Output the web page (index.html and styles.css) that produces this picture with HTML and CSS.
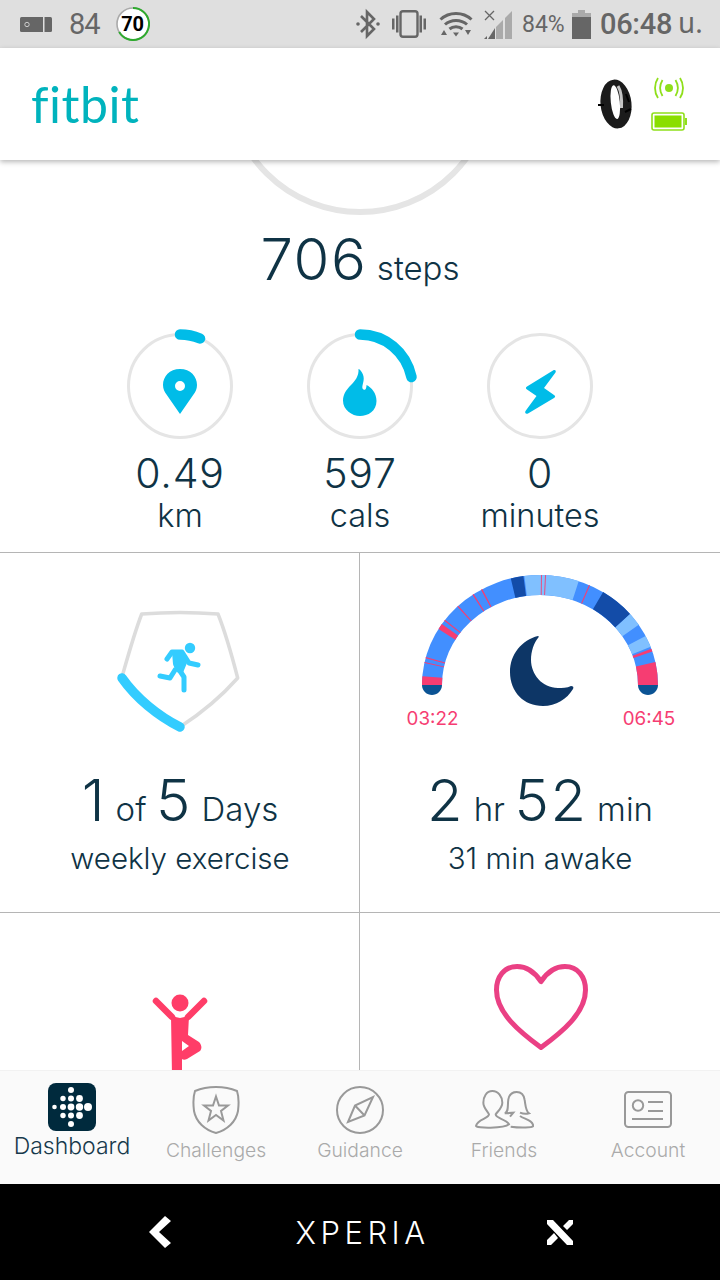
FILE: index.html
```html
<!DOCTYPE html>
<html lang="en">
<head>
<meta charset="utf-8">
<title>Fitbit dashboard</title>
<link rel="stylesheet" href="styles.css">
</head>
<body>
<div class="phone">
  <div class="status">
    <div class="status-left">
      <svg class="ic-card" viewBox="0 0 32 15"><rect width="32" height="15" rx="1.5" fill="#666"/><rect x="23" y="0" width="1.5" height="15" fill="#dfdfdf"/><circle cx="7" cy="7.5" r="2.2" fill="none" stroke="#ccc" stroke-width="1"/></svg>
      <span class="status-num">84</span>
      <span class="speed"><svg class="speed-ring" viewBox="0 0 34 34"><circle cx="17" cy="17" r="16" fill="#fff" stroke="#aaa" stroke-width="1.6"/><path d="M17 1A16 16 0 1 1 3.2 25" fill="none" stroke="#2eaa2e" stroke-width="2"/></svg><b class="speed-text">70</b></span>
    </div>
    <div class="status-right">
      <svg class="ic-bt" viewBox="0 0 24 32"><path d="M5 8L18 21L11 28V4L18 11L5 24" fill="none" stroke="#666" stroke-width="2.6"/><circle cx="2" cy="16" r="1.8" fill="#666"/><circle cx="22" cy="16" r="1.8" fill="#666"/></svg>
      <svg class="ic-vib" viewBox="0 0 36 28"><rect x="9.5" y="1.2" width="17" height="25.6" rx="2.5" fill="none" stroke="#666" stroke-width="2.4"/><path d="M1 8.5h2.5v11H1zM5 5.500h2.500v17H5zM28.500 5.500H31v17h-2.500zM32.500 8.500H35v11h-2.500z" fill="#666"/></svg>
      <svg class="ic-wifi" viewBox="0 0 34 28"><path d="M1.500 9.500C10 1.500 24 1.500 32.500 9.500M6 14.500C12 9 22 9 28 14.500M10.500 19C14 16 20 16 23.500 19" fill="none" stroke="#666" stroke-width="3"/><path d="M14 22.500h6l-3 4zM2 25l3-5 3 5zM26 20h6l-3 5z" fill="#666"/></svg>
      <svg class="ic-sig" viewBox="0 0 28 32"><path d="M28 3V31H21V10z" fill="#aaa"/><path d="M19 12V31H12V19z" fill="#aaa"/><path d="M11 20V31H4z" fill="#666"/><path d="M3 28v3H0z" fill="#666"/><path d="M1 3l9 9M10 3l-9 9" stroke="#666" stroke-width="1.300"/></svg>
      <span class="status-pct">84%</span>
      <svg class="ic-batt" viewBox="0 0 19 29"><path d="M6 0h7v3h6v26H0V3h6z" fill="#666"/><path d="M6 0h7v3h6v4H0V3h6z" fill="#aaa"/></svg>
      <span class="status-time">06:48</span>
      <span class="status-era">น.</span>
    </div>
  </div>

  <header class="topbar">
    <span class="logo">fitbit</span>
    <div class="device">
      <svg class="ic-band" viewBox="0 0 36 52"><g transform="rotate(-6 18 26)"><ellipse cx="18" cy="26" rx="15.500" ry="24.500" fill="#1b1b1b"/><ellipse cx="17.500" cy="24" rx="4.500" ry="17" fill="#fff"/></g><path d="M20 8C23 13 24 21 23.500 30" fill="none" stroke="#c4c4c4" stroke-width="3"/><path d="M28 16l3 8M27 34l6-3M0 27h6" stroke="#000" stroke-width="2"/></svg>
      <div class="device-state">
        <svg class="ic-sync" viewBox="0 0 30 22"><circle cx="15" cy="11" r="4" fill="#8fdf1a"/><path d="M8.500 3C5.500 8 5.500 14 8.500 19M4 1C0 7 0 15 4 21M21.500 3C24.500 8 24.500 14 21.500 19M26 1C30 7 30 15 26 21" fill="none" stroke="#8fdf1a" stroke-width="1.800"/></svg>
        <svg class="ic-charge" viewBox="0 0 36 19"><rect x="1" y="1" width="32" height="17" rx="2" fill="#fff" stroke="#8fdf1a" stroke-width="1.600"/><rect x="3.500" y="3.500" width="27" height="12" fill="#8ade00"/><rect x="34" y="6" width="2" height="7" fill="#8fdf1a"/></svg>
      </div>
    </div>
  </header>

  <main class="content">
    <section class="hero">
      <svg class="hero-arc" viewBox="200 160 320 56"><circle cx="360" cy="80" r="132" fill="none" stroke="#e5e5e5" stroke-width="6"/></svg>
      <p class="steps"><span class="big">706</span> <span class="unit">steps</span></p>
      <div class="stats">
        <div class="stat">
          <svg class="stat-ring" viewBox="0 0 120 120"><circle cx="60" cy="60" r="51.500" fill="none" stroke="#e5e5e5" stroke-width="3"/><path d="M60 8.500A51.500 51.500 0 0 1 80 12.500" fill="none" stroke="#00bce8" stroke-width="10.500" stroke-linecap="round"/><path d="M60 43C49.500 43 43 50.500 43 59C43 63 44.500 66 46.500 68.500L60 88L73.500 68.500C75.500 66 77 63 77 59C77 50.500 70.500 43 60 43ZM60 55A5 5 0 1 1 60 65A5 5 0 1 1 60 55Z" fill="#00bce8" fill-rule="evenodd"/></svg>
          <div class="stat-val">0.49</div>
          <div class="stat-unit">km</div>
        </div>
        <div class="stat">
          <svg class="stat-ring" viewBox="0 0 120 120"><circle cx="60" cy="60" r="51.500" fill="none" stroke="#e5e5e5" stroke-width="3"/><path d="M60 8.500C85 8.500 106 26 111.500 51" fill="none" stroke="#00bce8" stroke-width="10.500" stroke-linecap="round"/><path d="M58.500 43C60 43 65 49 63.500 55C62.500 60 61.500 62 63.500 63.500C66 65 66.500 61 66.500 59C71.500 61.500 76.500 67 76.500 75C76.500 85 68 90 60 90C52 90 43 84 43 74.500C43 68 47 63 51 59C55 55 59 50 58.500 43Z" fill="#00bce8"/></svg>
          <div class="stat-val">597</div>
          <div class="stat-unit">cals</div>
        </div>
        <div class="stat">
          <svg class="stat-ring" viewBox="0 0 120 120"><circle cx="60" cy="60" r="51.500" fill="none" stroke="#e5e5e5" stroke-width="3"/><path d="M73 44.500L47 60.500C45.500 61.500 45.500 62.500 47 63.500L56.500 70L45.500 85C44.500 87 46 88.500 48 87.500L74 72C75.500 71 75.500 70 74 69L64 62L75.500 46.500C76.500 44.500 75 43.500 73 44.500Z" fill="#00bce8"/></svg>
          <div class="stat-val">0</div>
          <div class="stat-unit">minutes</div>
        </div>
      </div>
    </section>

    <section class="tiles">
      <article class="tile">
        <svg class="tile-art" viewBox="90 600 180 140">
          <path d="M121.700 678C128 656 134 634 141.700 614C166 612 194 612 218 614C226 634 232 656 237.700 678C220 698 200 714 180 727C158 716 138 698 121.700 678Z" fill="none" stroke="#dcdcdc" stroke-width="3.500" stroke-linejoin="round"/>
          <path d="M122 678C136 698 158 716 180 727" fill="none" stroke="#33ccff" stroke-width="9.500" stroke-linecap="round"/>
          <circle cx="190" cy="648" r="5.200" fill="#33ccff"/>
          <path d="M167 659L172 652H182L189 663L198 665M179 655L176 665L184 677L184 690M175 670L170 678L160 676" fill="none" stroke="#33ccff" stroke-width="5" stroke-linecap="round" stroke-linejoin="round"/>
          <path d="M172 652H183L187 663L182 675L177 672L173 664Z" fill="#33ccff"/>
        </svg>
        <p class="metric"><span class="big">1</span> <span class="unit">of</span> <span class="big">5</span> <span class="unit">Days</span></p>
        <p class="caption">weekly exercise</p>
      </article>
      <article class="tile tile-r">
        <svg class="tile-art tile-art-wide" viewBox="360 560 360 180">
          <g fill="none" stroke-width="20">
            <path d="M432 685A108 100 0 0 1 648 685" stroke="#428fff" pathLength="180"/>
            <path d="M432 685A108 100 0 0 1 648 685" stroke="#f63d72" pathLength="180" stroke-dasharray="4.500 6.500 .6 1.900 .6 15.400 3 2 .7 9 .7 9 .7 4.300 .7 173"/>
            <path d="M432 685A108 100 0 0 1 648 685" stroke="#134ca8" pathLength="180" stroke-dasharray="0 75 6.500 42 17.500 140"/>
            <path d="M432 685A108 100 0 0 1 648 685" stroke="#80c0ff" pathLength="180" stroke-dasharray="0 82 28 31 7 6.500 6 60"/>
            <path d="M432 685A108 100 0 0 1 648 685" stroke="#f63d72" pathLength="180" stroke-dasharray="0 90.500 .5 1.600 .5 22.400 .6 45.400 1.500 5.500 12.500 90"/>
          </g>
          <path d="M422 685H442C442 691 437 695 432 695C427 695 422 691 422 685ZM638 685H658C658 691 653 695 648 695C643 695 638 691 638 685Z" fill="#0b5394"/>
          <path d="M538 636C522 640 510 654 510 672C510 692 524 706 543 706C556 706 567 699 573 689C574 687 573 686 571 686C567 688 562 688 558 688C542 688 531 674 531 660C531 651 534 643 538 638C539 637 539 636 538 636Z" fill="#0d3666"/>
          <text class="sleep-time" x="432.500" y="725" text-anchor="middle">03:22</text>
          <text class="sleep-time" x="649" y="725" text-anchor="middle">06:45</text>
        </svg>
        <p class="metric"><span class="big">2</span> <span class="unit">hr</span> <span class="big">52</span> <span class="unit">min</span></p>
        <p class="caption">31 min awake</p>
      </article>
      <article class="tile tile-b">
        <svg class="yoga" viewBox="140 990 80 85"><circle cx="180" cy="1003" r="8.500" fill="#ff3d68"/><path d="M156 1001L172 1017M204 1001L188 1017" stroke="#ff3d68" stroke-width="6.500" stroke-linecap="round"/><path d="M171 1016L180 1018L189 1016L188 1035L199 1042C202 1045 202 1049 200 1051L187 1059C185 1060 183 1060 182 1059V1075H172ZM182 1041V1051L189 1046Z" fill="#ff3d68" fill-rule="evenodd"/></svg>
      </article>
      <article class="tile tile-b tile-r">
        <svg class="heart" viewBox="460 950 160 110"><path d="M541 981.500C534 971 526 966.500 517 966.500C504 966.500 496.500 977 496.500 990C496.500 1013 520 1032 541 1047.500C562 1032 585.500 1013 585.500 990C585.500 977 578 966.500 565 966.500C556 966.500 548 971 541 981.500Z" fill="none" stroke="#ea4084" stroke-width="5" stroke-linejoin="round"/></svg>
      </article>
    </section>
  </main>

  <nav class="tabs">
    <a class="tab tab-on">
      <svg class="tab-logo" viewBox="0 0 48 48"><rect width="48" height="48" rx="8" fill="#002a3d"/><g fill="#fff"><circle cx="23" cy="7" r="3"/><circle cx="15" cy="15.500" r="2.700"/><circle cx="23" cy="15.500" r="3"/><circle cx="31.500" cy="15.500" r="3.400"/><circle cx="6.500" cy="24" r="2.300"/><circle cx="15" cy="24" r="3"/><circle cx="23" cy="24" r="3.400"/><circle cx="31.500" cy="24" r="3.700"/><circle cx="40" cy="24" r="4"/><circle cx="15" cy="32.500" r="2.700"/><circle cx="23" cy="32.500" r="3"/><circle cx="31.500" cy="32.500" r="3.400"/><circle cx="23" cy="41" r="3"/></g></svg>
      <span class="tab-label">Dashboard</span>
    </a>
    <a class="tab">
      <svg class="tab-ic" viewBox="0 0 48 48"><path d="M24 1C31 1 38 2 45 5C47 11 47 17 46 25C44 36 35 44 24 47C13 44 4 36 2 25C1 17 1 11 3 5C10 2 17 1 24 1Z"/><path d="M24 10.500L27 19.500H36L29 25L31.500 34.500L24 29L16.500 34.500L19 25L12 19.500H21Z"/></svg>
      <span class="tab-label">Challenges</span>
    </a>
    <a class="tab">
      <svg class="tab-ic" viewBox="0 0 48 48"><circle cx="24" cy="24" r="23"/><path d="M37 11L28.500 29.500L12 36L19 19.500ZM19 19.500L28.500 29.500"/></svg>
      <span class="tab-label">Guidance</span>
    </a>
    <a class="tab">
      <svg class="tab-ic tab-ic-wide" viewBox="340 50 180 144"><path class="thick" d="M395 65C377 65 368 83 368 100C368 115 380 125 385 135C385 148 350 150 346 170C346 177 430 178 445 165C435 148 405 148 405 135C412 125 425 115 425 100C425 83 413 65 395 65Z"/><path class="thick" d="M432 132C445 128 440 110 443 90C446 75 455 68 468 68C482 68 490 78 492 92C495 110 495 125 505 132C495 135 485 133 478 130M478 140C490 150 515 150 518 170C515 175 480 176 450 172M432 132L458 130L448 142"/></svg>
      <span class="tab-label">Friends</span>
    </a>
    <a class="tab">
      <svg class="tab-ic" viewBox="0 0 48 48"><rect x="1" y="6" width="46" height="35" rx="3.500"/><circle cx="14" cy="19.500" r="5.200"/><path d="M24 16H39M24 25H39M8 33H39"/></svg>
      <span class="tab-label">Account</span>
    </a>
  </nav>

  <footer class="sysbar">
    <svg class="sys-back" viewBox="0 0 24 34"><path d="M17 1L23 6L11 17L23 28L17 33L1 17Z" fill="#fff"/></svg>
    <span class="xperia">XPERIA</span>
    <svg class="sys-x" viewBox="0 0 28 27"><path d="M1 1H7L27 22V26H21L1 5ZM1 26V21L8 14L12 19L5 26ZM27 1V5L21 11L17 7L23 1Z" fill="#fff"/></svg>
  </footer>
</div>
</body>
</html>
```
FILE: styles.css
```css
* { box-sizing: border-box; }
html, body { margin: 0; padding: 0; background: #fff; }
body { font-family: Inter, Lato, "Noto Sans", sans-serif; color: #0f3345; }
p { margin: 0; }
svg { display: block; }

.phone { width: 720px; height: 1280px; display: flex; flex-direction: column; overflow: hidden; position: relative; }

/* Android status bar */
.status { height: 48px; flex: none; background: #dfdfdf; display: flex; justify-content: space-between; align-items: center; color: #666; font-family: Roboto, sans-serif; }
.status-left { display: flex; align-items: center; padding-left: 20px; }
.ic-card { width: 32px; height: 15px; margin-right: 17px; }
.status-num { font-size: 29px; letter-spacing: -1px; margin-right: 16px; }
.speed { position: relative; width: 34px; height: 34px; }
.speed-ring { width: 34px; height: 34px; }
.speed-text { position: absolute; inset: 0; text-align: center; line-height: 34px; font-size: 20px; color: #000; font-weight: 700; }
.status-right { display: flex; align-items: center; padding-right: 17px; }
.ic-bt { width: 24px; height: 32px; margin-right: 11px; }
.ic-vib { width: 36px; height: 28px; margin-right: 12px; }
.ic-wifi { width: 34px; height: 28px; margin-right: 11px; }
.ic-sig { width: 28px; height: 32px; margin-right: 10px; }
.status-pct { font-size: 23px; width: 44px; margin-right: 6px; }
.ic-batt { width: 19px; height: 29px; margin-right: 9px; }
.status-time { font-size: 29px; font-weight: 500; width: 70px; margin-right: 8px; letter-spacing: -.3px; }
.status-era { font-size: 28px; font-family: "Noto Sans Thai", "Noto Sans", "DejaVu Sans", sans-serif; width: 25px; }

/* App bar */
.topbar { height: 112px; flex: none; background: #fff; display: flex; justify-content: space-between; align-items: center; padding: 0 33px 0 31px; box-shadow: 0 2px 5px rgba(0,0,0,.28); z-index: 2; }
.logo { font-family: Lato, sans-serif; font-weight: 400; font-size: 50px; color: #00b3bd; line-height: 1; letter-spacing: .5px; }
.device { display: flex; align-items: center; gap: 17px; }
.ic-band { width: 36px; height: 52px; }
.device-state { display: flex; flex-direction: column; align-items: center; gap: 13px; }
.ic-sync { width: 30px; height: 22px; }
.ic-charge { width: 36px; height: 19px; }

/* Scrolling body */
.content { flex: 1; min-height: 0; overflow: hidden; background: #fff; }
.hero { height: 392px; }
.hero-arc { width: 320px; height: 56px; margin: 0 auto; }
.big { font-weight: 300; font-size: 58px; letter-spacing: 1.500px; }
.unit { font-weight: 300; font-size: 33px; }
.steps, .metric { text-align: center; line-height: 72px; font-size: 34px; font-weight: 300; }
.steps { margin-top: 7px; }
.stats { display: grid; grid-template-columns: repeat(3, 180px); justify-content: center; margin-top: 22px; }
.stat { display: flex; flex-direction: column; align-items: center; }
.stat-ring { width: 120px; height: 120px; }
.stat-val { font-weight: 300; font-size: 41px; line-height: 46px; margin-top: 4px; letter-spacing: .8px; }
.stat-unit { font-weight: 300; font-size: 32.500px; line-height: 40px; }

/* Tile grid */
.tiles { display: grid; grid-template-columns: 360px 360px; grid-auto-rows: 359px; border-top: 1px solid #b5b5b5; }
.tile { display: flex; flex-direction: column; align-items: center; padding-top: 7px; }
.tile-r { border-left: 1px solid #b5b5b5; margin-left: -1px; width: 361px; }
.tile-b { border-top: 1px solid #b5b5b5; padding-top: 0; }
.tile-art { width: 180px; height: 140px; flex: none; margin-top: 40px; }
.tile-art-wide { width: 360px; height: 180px; margin-top: 0; }
.yoga { width: 80px; height: 85px; flex: none; margin-top: 77px; }
.heart { width: 160px; height: 110px; flex: none; margin-top: 37px; }
.metric { margin-top: 24px; }
.caption { font-weight: 300; font-size: 29.500px; line-height: 40px; margin-top: -7px; }
.sleep-time { font-family: Inter, sans-serif; font-size: 18.800px; fill: #f63d72; }

/* Tab bar */
.tabs { height: 114px; flex: none; background: #fafafa; display: grid; grid-template-columns: repeat(5, 144px); z-index: 2; border-top: 1px solid #f2f2f2; }
.tab { display: flex; flex-direction: column; align-items: center; padding-top: 15px; color: #aaa; font-size: 19.300px; font-weight: 300; }
.tab-logo { width: 48px; height: 48px; }
.tab-ic { width: 48px; height: 48px; fill: none; stroke: #999; stroke-width: 2; }
.tab-ic-wide { width: 60px; }
.thick { stroke-width: 6; }
.tab-label { line-height: 24px; margin-top: 4px; }
.tab-on { color: #17394b; font-size: 23px; padding-top: 12px; }
.tab-on .tab-label { margin-top: 3px; }

/* System navigation */
.sysbar { height: 96px; flex: none; background: #000; display: grid; grid-template-columns: 1fr 1fr 1fr; align-items: center; justify-items: center; padding: 0 60px; }
.sys-back { width: 24px; height: 34px; }
.xperia { color: #fff; font-family: Inter, sans-serif; font-weight: 300; font-size: 31px; letter-spacing: 4.500px; margin-right: -5px; }
.sys-x { width: 28px; height: 27px; }
```
